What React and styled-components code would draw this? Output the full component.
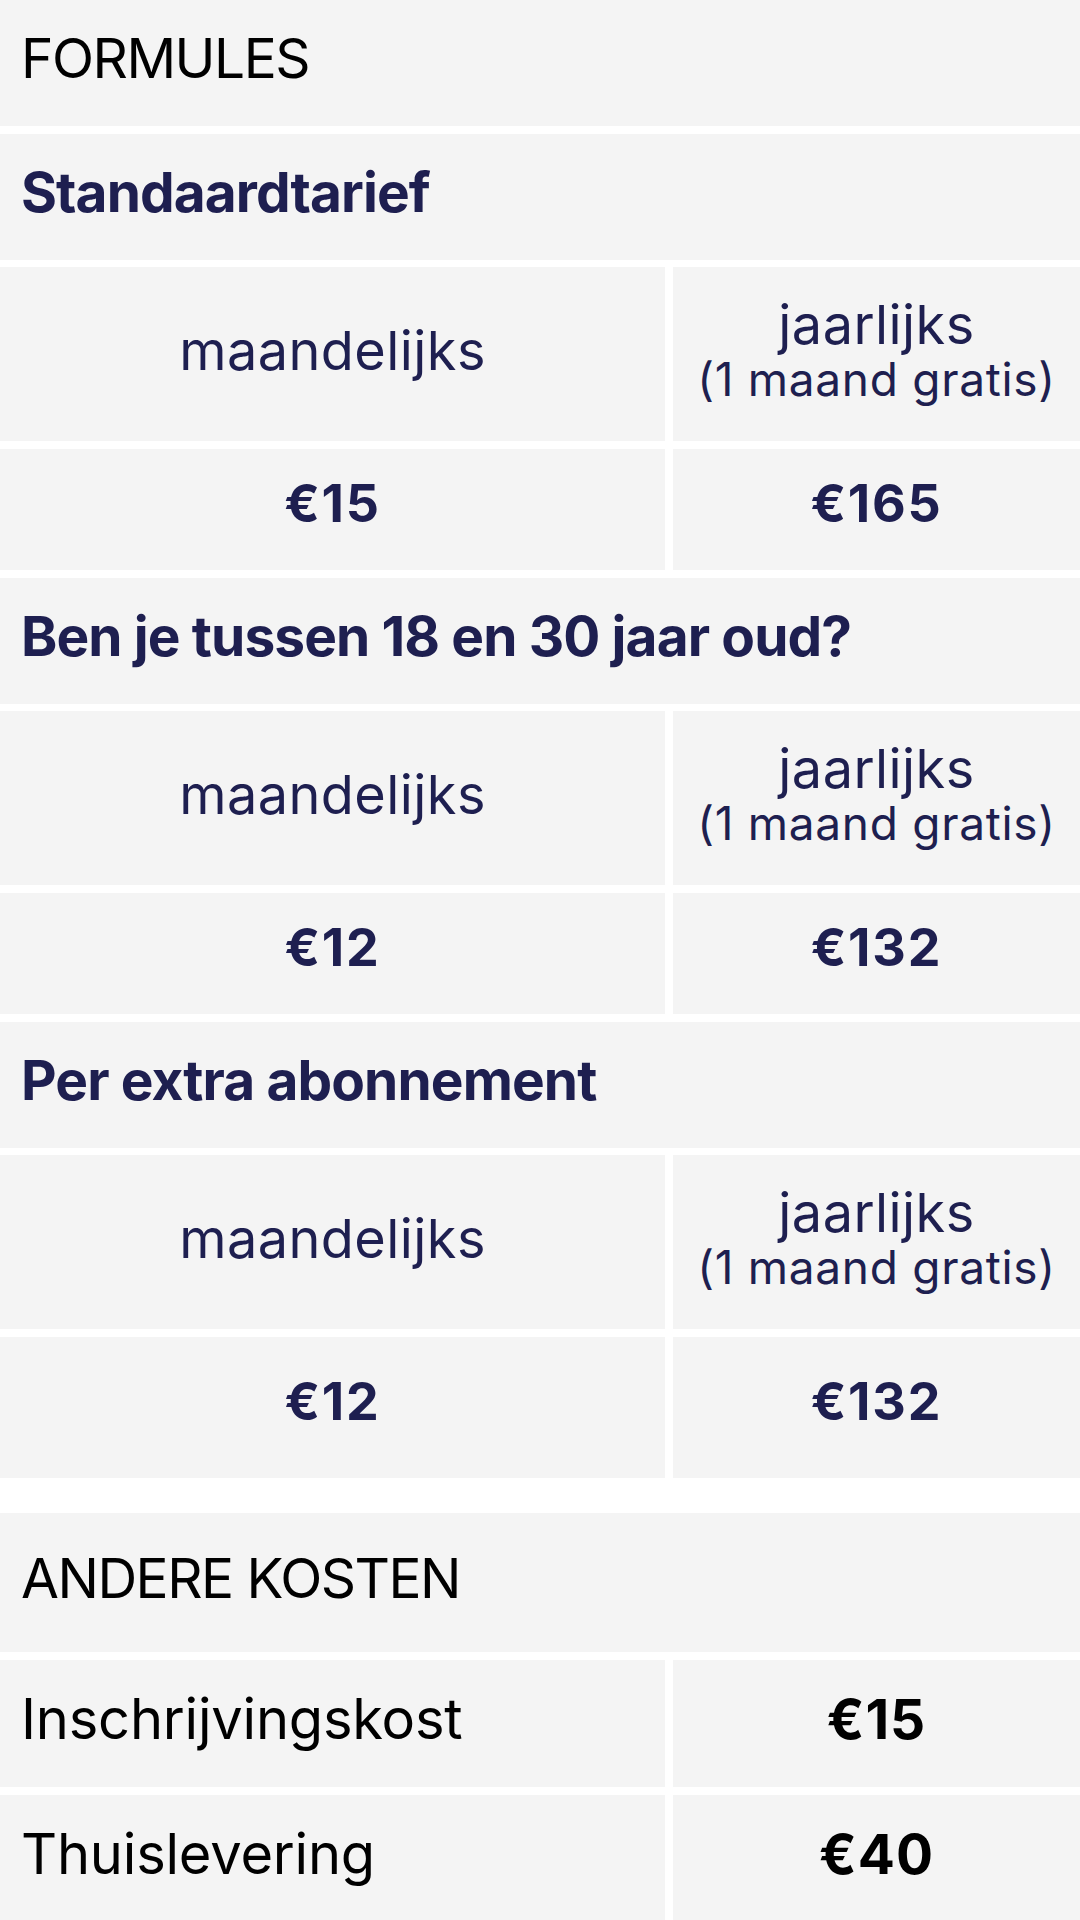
import React from 'react';
import styled, { createGlobalStyle } from 'styled-components';

const plans = [
  { title: 'Standaardtarief', monthly: '€15', yearly: '€165' },
  { title: 'Ben je tussen 18 en 30 jaar oud?', monthly: '€12', yearly: '€132' },
  { title: 'Per extra abonnement', monthly: '€12', yearly: '€132' },
];

const costs = [
  { label: 'Inschrijvingskost', price: '€15' },
  { label: 'Thuislevering', price: '€40' },
];

const App = () => {
  return (
    <Page>
      <GlobalStyle />
      <PriceTable>
        <SectionHeading>FORMULES</SectionHeading>
        {plans.map((plan, i) => (
          <React.Fragment key={plan.title}>
            <PlanTitle>{plan.title}</PlanTitle>
            <PeriodCell>maandelijks</PeriodCell>
            <PeriodCell>
              jaarlijks
              <PeriodNote>(1 maand gratis)</PeriodNote>
            </PeriodCell>
            <PriceCell $last={i === plans.length - 1}>{plan.monthly}</PriceCell>
            <PriceCell $last={i === plans.length - 1}>{plan.yearly}</PriceCell>
          </React.Fragment>
        ))}
      </PriceTable>

      <CostTable>
        <SectionHeading $tall>ANDERE KOSTEN</SectionHeading>
        {costs.map((cost) => (
          <React.Fragment key={cost.label}>
            <CostLabel>{cost.label}</CostLabel>
            <CostPrice>{cost.price}</CostPrice>
          </React.Fragment>
        ))}
      </CostTable>
    </Page>
  );
};

export default App;


const GlobalStyle = createGlobalStyle`
  html, body { margin: 0; padding: 0; background: #fff; }
  body {
    font-family: Inter, "Noto Sans", sans-serif;
    -webkit-font-smoothing: antialiased;
  }
`;

const NAVY = '#1e1f50';
const CELL_BG = '#f4f4f4';

const Page = styled.div`
  width: 1080px;
  display: flex;
  flex-direction: column;
  gap: 35.5px;
`;

const PriceTable = styled.div`
  display: grid;
  grid-template-columns: minmax(0, 665fr) minmax(0, 407fr);
  gap: 7.5px 8px;
`;

const CostTable = styled(PriceTable)``;

const SectionHeading = styled.div`
  grid-column: 1 / -1;
  background: ${CELL_BG};
  color: #000;
  font-size: 55px;
  font-weight: 400;
  line-height: 60px;
  letter-spacing: -1.5px;
  padding: ${(p) => (p.$tall ? '34.5px 21px 44.5px' : '28px 21px 38px')};
`;

const PlanTitle = styled.div`
  grid-column: 1 / -1;
  background: ${CELL_BG};
  color: ${NAVY};
  font-size: 55px;
  font-weight: 700;
  line-height: 60px;
  letter-spacing: -0.9px;
  padding: 28.5px 21px 37.5px;
`;

const PeriodCell = styled.div`
  display: flex;
  flex-direction: column;
  align-items: center;
  justify-content: center;
  background: ${CELL_BG};
  color: ${NAVY};
  font-size: 54px;
  font-weight: 400;
  line-height: 58px;
  letter-spacing: 0.45px;
  text-align: center;
  padding: 29px 0 36px;
`;

const PeriodNote = styled.span`
  font-size: 46px;
  line-height: 51px;
  letter-spacing: 0.7px;
`;

const PriceCell = styled.div`
  display: flex;
  align-items: center;
  justify-content: center;
  background: ${CELL_BG};
  color: ${NAVY};
  font-size: 52px;
  font-weight: 700;
  line-height: 57px;
  letter-spacing: 1.8px;
  padding: ${(p) => (p.$last ? '36px 0 47.8px' : '26.5px 0 38.2px')};
`;

const CostLabel = styled.div`
  background: ${CELL_BG};
  color: #000;
  font-size: 56px;
  font-weight: 400;
  line-height: 60px;
  letter-spacing: -0.2px;
  padding: 29.5px 21px 38px;
`;

const CostPrice = styled.div`
  display: flex;
  align-items: center;
  justify-content: center;
  background: ${CELL_BG};
  color: #000;
  font-size: 55px;
  font-weight: 700;
  line-height: 60px;
  letter-spacing: 1px;
  padding-bottom: 8px;
`;
